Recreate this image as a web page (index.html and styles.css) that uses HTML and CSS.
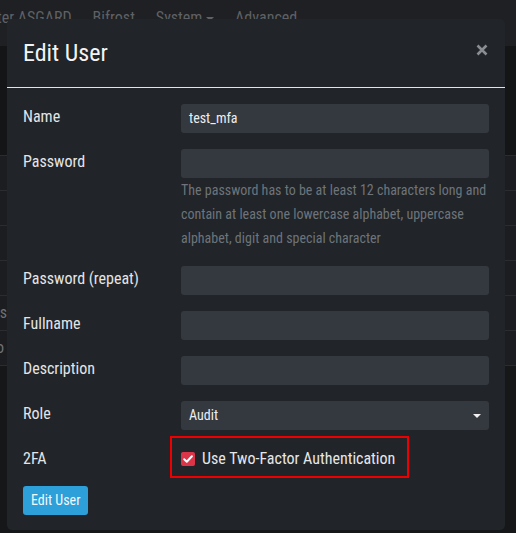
FILE: index.html
```html
<!DOCTYPE html>
<html lang="en">
<head>
<meta charset="utf-8">
<title>Edit User</title>
<link rel="stylesheet" href="styles.css">
</head>
<body>
<div class="page">
  <nav class="navbar">
    <span class="nav-item brand">ter ASGARD</span>
    <span class="nav-item">Bifrost</span>
    <span class="nav-item">System <span class="caret-small"></span></span>
    <span class="nav-item">Advanced</span>
  </nav>
  <div class="gap-area"></div>
  <div class="table">
    <div class="trow"></div>
    <div class="trow"></div>
    <div class="trow"></div>
    <div class="trow"></div>
    <div class="trow"><span class="cell-text">is</span></div>
    <div class="trow"><span class="cell-text">o</span></div>
  </div>
</div>

<div class="modal">
  <div class="modal-header">
    <h5 class="modal-title">Edit User</h5>
    <span class="close" aria-label="Close">
      <svg width="12" height="12" viewBox="0 0 12 12"><path d="M1.5 1.5 L10.5 10.5 M10.5 1.5 L1.5 10.5" stroke="#8a8d91" stroke-width="2.6" stroke-linecap="butt" fill="none"/></svg>
    </span>
  </div>
  <div class="modal-body">
    <div class="form-row">
      <label class="form-label">Name</label>
      <div class="field"><div class="input">test_mfa</div></div>
    </div>
    <div class="form-row">
      <label class="form-label">Password</label>
      <div class="field">
        <div class="input"></div>
        <div class="help">The password has to be at least 12 characters long and contain at least one lowercase alphabet, uppercase alphabet, digit and special character</div>
      </div>
    </div>
    <div class="form-row">
      <label class="form-label">Password (repeat)</label>
      <div class="field"><div class="input"></div></div>
    </div>
    <div class="form-row">
      <label class="form-label">Fullname</label>
      <div class="field"><div class="input"></div></div>
    </div>
    <div class="form-row">
      <label class="form-label">Description</label>
      <div class="field"><div class="input"></div></div>
    </div>
    <div class="form-row">
      <label class="form-label">Role</label>
      <div class="field"><div class="input select">Audit<span class="caret"></span></div></div>
    </div>
    <div class="form-row twofa">
      <label class="form-label">2FA</label>
      <div class="field check-field">
        <span class="checkbox">
          <svg width="14" height="14" viewBox="0 0 14 14"><path d="M3.2 7.3 L5.8 9.8 L10.9 4.3" stroke="#fff" stroke-width="2" fill="none" stroke-linecap="round" stroke-linejoin="round"/></svg>
        </span>
        <span class="check-label">Use Two-Factor Authentication</span>
        <span class="highlight"></span>
      </div>
    </div>
    <button class="btn">Edit User</button>
  </div>
</div>
</body>
</html>
```
FILE: styles.css
```css
html, body {
  margin: 0;
  padding: 0;
}
body {
  width: 516px;
  height: 533px;
  overflow: hidden;
  background: #161719;
  font-family: "Roboto Condensed", "Roboto", sans-serif;
  color: #e6e7e8;
  position: relative;
}
.page {
  display: flex;
  flex-direction: column;
}
.navbar {
  height: 46px;
  background: #1e2023;
  display: flex;
  gap: 21px;
  padding-top: 6px;
  box-sizing: border-box;
  font-size: 16px;
  line-height: 24px;
  color: #5e6165;
}
.brand {
  margin-left: -3px;
}
.caret-small {
  display: inline-block;
  width: 0;
  height: 0;
  border-left: 4px solid transparent;
  border-right: 4px solid transparent;
  border-top: 4px solid #5e6165;
  vertical-align: middle;
}
.gap-area {
  height: 109px;
  background: #141517;
}
.table {
  display: flex;
  flex-direction: column;
}
.trow {
  height: 34px;
  border-top: 1px solid #2a2c2f;
  background: #1b1d20;
  font-size: 16px;
  line-height: 34px;
  color: #6e7175;
}
.trow:last-child {
  border-bottom: 1px solid #2a2c2f;
}
.cell-text {
  margin-left: -4px;
}

.modal {
  position: absolute;
  left: 7px;
  top: 19px;
  width: 498px;
  background: #212428;
  border-radius: 5px;
}
.modal-header {
  display: flex;
  justify-content: space-between;
  align-items: flex-start;
  padding: 16px 17px 16px 16px;
  border-bottom: 1px solid #e2e4e6;
}
.modal-title {
  margin: 0;
  font-size: 24px;
  font-weight: 400;
  line-height: 36px;
  color: #f2f3f4;
}
.close {
  display: block;
  margin-top: 9px;
  width: 12px;
  height: 12px;
}
.close svg {
  display: block;
}
.modal-body {
  padding: 16px 16px 15px 16px;
}
.form-row {
  display: grid;
  grid-template-columns: 158px 1fr;
  margin-bottom: 16px;
}
.form-label {
  font-size: 16px;
  line-height: 24px;
  padding-top: 1px;
  color: #e4e5e7;
}
.input {
  height: 29px;
  background: #343940;
  border-radius: 3px;
  box-sizing: border-box;
  padding: 0 8px;
  font-size: 14px;
  line-height: 29px;
  color: #eceef0;
  display: flex;
  align-items: center;
}
.select {
  justify-content: space-between;
}
.caret {
  width: 0;
  height: 0;
  border-left: 4px solid transparent;
  border-right: 4px solid transparent;
  border-top: 4px solid #f0f0f0;
  margin-right: 0px;
}
.help {
  font-size: 14px;
  line-height: 24px;
  color: #6d747b;
}
.twofa {
  padding-top: 1px;
  margin-bottom: 15px;
}
.twofa .form-label {
  padding-top: 0;
}
.check-field {
  position: relative;
  display: flex;
  align-items: center;
  height: 24px;
}
.checkbox {
  width: 14px;
  height: 14px;
  border-radius: 2px;
  background: #dc3549;
  display: block;
  margin-left: 0;
}
.checkbox svg {
  display: block;
}
.check-label {
  margin-left: 7px;
  font-size: 16px;
  line-height: 24px;
  color: #e6e7e9;
}
.highlight {
  position: absolute;
  left: -11px;
  top: -11px;
  width: 239px;
  height: 42px;
  box-sizing: border-box;
  border: 2px solid #ee0000;
  pointer-events: none;
}
.btn {
  display: block;
  height: 29px;
  padding: 0 8px;
  border: none;
  border-radius: 3px;
  background: #2d9fd9;
  color: #f4f8fb;
  font-family: "Roboto Condensed", "Roboto", sans-serif;
  font-size: 14px;
  line-height: 29px;
}
```
